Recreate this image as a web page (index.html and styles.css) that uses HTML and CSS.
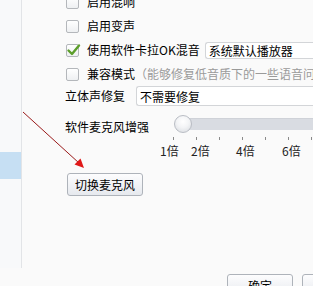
FILE: index.html
```html
<!DOCTYPE html>
<html lang="zh-CN">
<head>
<meta charset="utf-8">
<link rel="stylesheet" href="styles.css">
</head>
<body>
<div class="page">
  <aside class="side">
    <div class="side-item side-item-selected"></div>
  </aside>
  <main class="main">
    <div class="opts">
      <div class="chk-row"><span class="chk"></span><span class="chk-text">启用混响</span></div>
      <div class="chk-row"><span class="chk"></span><span class="chk-text">启用变声</span></div>
      <div class="chk-row">
        <span class="chk chk-on"><svg viewBox="0 0 15 15" width="15" height="15"><path d="M2.5 7.5 L6 11 L13 2.5" fill="none" stroke="#5c9e2b" stroke-width="2.4" stroke-linecap="round" stroke-linejoin="round"/></svg></span>
        <span class="chk-text">使用软件卡拉OK混音</span>
        <span class="combo combo-sm">系统默认播放器</span>
      </div>
      <div class="chk-row"><span class="chk"></span><span class="chk-text">兼容模式</span><span class="hint">（能够修复低音质下的一些语音问题）</span></div>
      <div class="field-row"><span class="lbl">立体声修复</span><span class="combo combo-lg">不需要修复</span></div>
      <div class="slider-row">
        <span class="lbl lbl-slider">软件麦克风增强</span>
        <div class="slider">
          <div class="slider-bar">
            <div class="track"></div>
            <div class="thumb"></div>
          </div>
          <div class="ticks">
            <i></i><i></i><i></i><i></i><i></i><i></i><i></i>
          </div>
          <div class="scale">
            <span class="s1">1倍</span><span class="s2">2倍</span><span class="s4">4倍</span><span class="s6">6倍</span>
          </div>
        </div>
      </div>
      <button class="btn btn-mic">切换麦克风</button>
    </div>
    <div class="footer">
      <button class="btn btn-foot">确定</button>
      <button class="btn btn-foot">取消</button>
    </div>
  </main>
  <svg class="arrow" width="313" height="286" viewBox="0 0 313 286">
    <line x1="23" y1="112" x2="79" y2="163" stroke="#9a1a1a" stroke-width="1"/>
    <polygon points="84,168 74.5,164.5 80.5,158.5" fill="#e01818"/>
  </svg>
</div>
</body>
</html>
```
FILE: styles.css
```css
html, body {
  margin: 0;
  padding: 0;
}
body {
  background: #fafafa;
  font-family: "Noto Sans CJK SC", "Liberation Sans", sans-serif;
  font-size: 12px;
  color: #000;
}
.page {
  position: relative;
  width: 313px;
  height: 286px;
  overflow: hidden;
  display: flex;
}
.side {
  width: 21px;
  flex: none;
  background: #f8f9fa;
  border-right: 1px solid #e2e4e7;
  height: 268px;
}
.side-item {
  height: 27px;
}
.side-item-selected {
  margin-top: 152px;
  background: #c6dff3;
}
.main {
  flex: 1;
  min-width: 0;
  padding-left: 43px;
  overflow: hidden;
  white-space: nowrap;
}
.opts {
  margin-top: -10px;
  display: flex;
  flex-direction: column;
  align-items: flex-start;
}
.chk-row {
  height: 24px;
  display: flex;
  align-items: center;
  padding-left: 1px;
}
.chk {
  width: 11px;
  height: 11px;
  border: 1px solid #b4b7bb;
  border-radius: 2px;
  background: linear-gradient(#ffffff, #eef0f2);
  flex: none;
  position: relative;
  margin-right: 8px;
}
.chk-on svg {
  position: absolute;
  left: -1px;
  top: -2px;
}
.chk-text {
  line-height: 12px;
}
.hint {
  color: #9a9a9a;
  line-height: 12px;
}
.combo {
  background: #fff;
  border: 1px solid #d3d5d8;
  border-radius: 3px;
  display: flex;
  align-items: center;
  padding-left: 3px;
  flex: none;
  box-sizing: border-box;
  border-right: none;
  border-top-right-radius: 0;
  border-bottom-right-radius: 0;
}
.combo-sm {
  margin-left: 5px;
  height: 17px;
  width: 140px;
}
.combo-lg {
  margin-left: 11px;
  height: 20px;
  width: 200px;
}
.field-row {
  height: 20px;
  display: flex;
  align-items: center;
}
.lbl {
  line-height: 12px;
}
.slider-row {
  display: flex;
  align-items: flex-start;
}
.lbl-slider {
  margin-top: 15px;
}
.slider {
  margin-left: 24px;
  padding-top: 9px;
  width: 200px;
}
.slider-bar {
  display: grid;
  height: 18px;
}
.track {
  grid-area: 1 / 1;
  align-self: center;
  margin-left: 10px;
  height: 12px;
  background: #d9dce2;
  border-top: 1px solid #cfd2d8;
  box-sizing: border-box;
}
.thumb {
  grid-area: 1 / 1;
  justify-self: start;
  margin-left: 1px;
  width: 18px;
  height: 18px;
  box-sizing: border-box;
  border-radius: 50%;
  border: 1px solid #b9bdc4;
  background: radial-gradient(circle at 50% 35%, #ffffff 0%, #f3f4f6 45%, #d6d9de 100%);
}
.ticks {
  display: flex;
  gap: 22px;
  margin-top: 4px;
  height: 3px;
}
.ticks i {
  display: block;
  width: 1px;
  height: 3px;
  background: #8a8a8a;
}
.scale {
  display: flex;
  margin-top: 5px;
  margin-left: -13px;
  line-height: 12px;
  color: #222;
}
.scale span {
  width: 18px;
}
.s2 { margin-left: 13px; }
.s4 { margin-left: 27px; }
.s6 { margin-left: 28px; }
.btn {
  font-family: inherit;
  font-size: 12px;
  color: #000;
  border: 1px solid #aeb3ba;
  border-radius: 3px;
  background: linear-gradient(#fdfdfe, #e6e9ee);
  padding: 0;
  line-height: 12px;
}
.btn-mic {
  margin-top: 16px;
  margin-left: 2px;
  width: 76px;
  height: 23px;
}
.footer {
  margin-top: 78px;
  padding-left: 162px;
  display: flex;
  gap: 9px;
}
.btn-foot {
  width: 66px;
  height: 23px;
  flex: none;
}
.arrow {
  position: absolute;
  left: 0;
  top: 0;
  pointer-events: none;
}
```
